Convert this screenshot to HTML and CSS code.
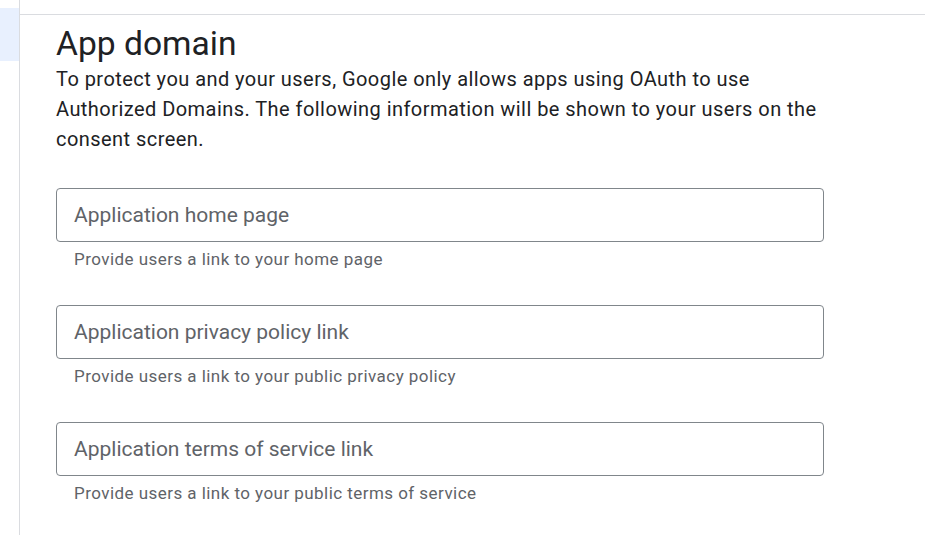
FILE: index.html
```html
<!DOCTYPE html>
<html>
<head>
<meta charset="utf-8">
<link rel="stylesheet" href="styles.css">
</head>
<body>
<div class="page">
  <aside class="sidebar">
    <div class="nav-item"></div>
  </aside>
  <main class="main">
    <div class="topbar"></div>
    <section class="content">
      <h2 class="title">App domain</h2>
      <p class="desc">To protect you and your users, Google only allows apps using OAuth to use Authorized Domains. The following information will be shown to your users on the consent screen.</p>
      <div class="field">
        <div class="input"><span class="placeholder">Application home page</span></div>
        <div class="hint">Provide users a link to your home page</div>
      </div>
      <div class="field">
        <div class="input"><span class="placeholder">Application privacy policy link</span></div>
        <div class="hint">Provide users a link to your public privacy policy</div>
      </div>
      <div class="field">
        <div class="input"><span class="placeholder">Application terms of service link</span></div>
        <div class="hint">Provide users a link to your public terms of service</div>
      </div>
    </section>
  </main>
</div>
</body>
</html>
```

FILE: styles.css
```css
* { box-sizing: border-box; }
html, body { margin: 0; padding: 0; background: #ffffff; }
body { font-family: Roboto, "Liberation Sans", Arial, sans-serif; color: #202124; }
.page { display: flex; min-height: 535px; }
.sidebar { width: 20px; flex: none; border-right: 1px solid #dadce0; padding-top: 8px; }
.nav-item { height: 53px; background: #e8f0fe; width: 19px; }
.main { flex: 1; display: flex; flex-direction: column; }
.topbar { height: 15px; border-bottom: 1px solid #dadce0; }
.content { padding: 8px 0 0 36px; }
.title { margin: 0; font-size: 33.6px; font-weight: 400; line-height: 41px; color: #202124; }
.desc { margin: 0; max-width: 775px; font-size: 20px; line-height: 30px; letter-spacing: 0.45px; color: #202124; }
.field { width: 768px; margin-top: 34px; }
.field + .field { margin-top: 34px; }
.input { height: 54px; border: 1px solid #80868b; border-radius: 4px; display: flex; align-items: center; padding-left: 17px; }
.placeholder { font-size: 21px; color: #5f6368; }
.hint { margin-top: 5px; padding-left: 18px; font-size: 17px; line-height: 24px; letter-spacing: 0.45px; color: #5f6368; }
```
